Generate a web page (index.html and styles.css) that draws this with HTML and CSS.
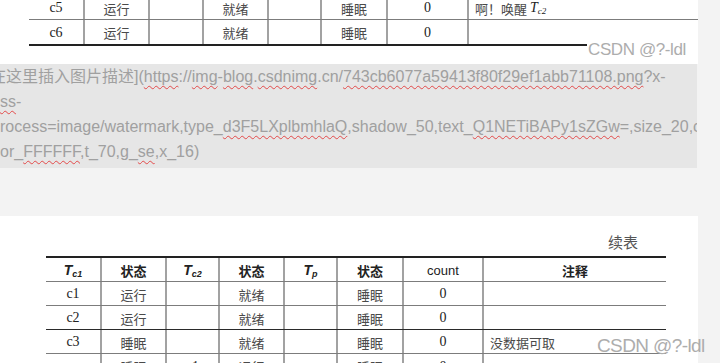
FILE: index.html
```html
<!DOCTYPE html>
<html lang="zh-CN">
<head>
<meta charset="utf-8">
<title>续表</title>
<link rel="stylesheet" href="styles.css">
</head>
<body>
<div class="page">
  <section class="card card-top">
    <div class="tbl tbl-top">
      <div class="grid-row row-gray">
        <div class="cell num">c5</div><div class="cell">运行</div><div class="cell"></div><div class="cell">就绪</div><div class="cell"></div><div class="cell">睡眠</div><div class="cell num">0</div><div class="cell note">啊！唤醒 <span class="tv">T<sub>c2</sub></span></div>
      </div>
      <div class="grid-row">
        <div class="cell num">c6</div><div class="cell">运行</div><div class="cell"></div><div class="cell">就绪</div><div class="cell"></div><div class="cell">睡眠</div><div class="cell num">0</div><div class="cell note"></div>
      </div>
      <div class="rule"></div>
    </div>
  </section>

  <section class="editor">
    <div class="ln ln1">在这里插入图片描述](<span class="sp">https</span>://<span class="sp">img</span>-<span class="sp">blog</span>.<span class="sp">csdnimg</span>.cn/<span class="sp">743cb6077a59413f80f29ef1abb71108.png</span>?x-</div>
    <div class="ln"><span class="sp">ss</span>-</div>
    <div class="ln">rocess=image/watermark,type_<span class="sp">d3F5LXplbmhlaQ</span>,shadow_50,text_<span class="sp">Q1NETiBAPy1sZGw</span>=,size_20,color</div>
    <div class="ln">or_<span class="sp">FFFFFF</span>,t_70,g_<span class="sp">se</span>,x_16)</div>
  </section>

  <div class="gap"></div>

  <section class="card card-bottom">
    <div class="caption">续表</div>
    <div class="tbl tbl-bottom">
      <div class="grid-row row-gray head">
        <div class="cell"><span class="tb">T<sub>c1</sub></span></div><div class="cell">状态</div><div class="cell"><span class="tb">T<sub>c2</sub></span></div><div class="cell">状态</div><div class="cell"><span class="tb">T<sub>p</sub></span></div><div class="cell">状态</div><div class="cell latin">count</div><div class="cell">注释</div>
      </div>
      <div class="grid-row row-gray">
        <div class="cell num">c1</div><div class="cell">运行</div><div class="cell"></div><div class="cell">就绪</div><div class="cell"></div><div class="cell">睡眠</div><div class="cell num">0</div><div class="cell note"></div>
      </div>
      <div class="grid-row row-dark">
        <div class="cell num">c2</div><div class="cell">运行</div><div class="cell"></div><div class="cell">就绪</div><div class="cell"></div><div class="cell">睡眠</div><div class="cell num">0</div><div class="cell note"></div>
      </div>
      <div class="grid-row row-gray">
        <div class="cell num">c3</div><div class="cell">睡眠</div><div class="cell"></div><div class="cell">就绪</div><div class="cell"></div><div class="cell">睡眠</div><div class="cell num">0</div><div class="cell note">没数据可取</div>
      </div>
      <div class="grid-row">
        <div class="cell num"></div><div class="cell">睡眠</div><div class="cell num">c1</div><div class="cell">运行</div><div class="cell"></div><div class="cell">睡眠</div><div class="cell num">0</div><div class="cell note"></div>
      </div>
    </div>
  </section>
</div>
<div class="wm wm-top">CSDN @?-ldl</div>
<div class="wm wm-bot">CSDN @?-ldl</div>
</body>
</html>
```

FILE: styles.css
```css
* { box-sizing: border-box; }
html, body { margin: 0; padding: 0; }
body {
  width: 720px;
  height: 363px;
  overflow: hidden;
  position: relative;
  background: #f3f3f3;
  font-family: "Liberation Sans", "Noto Sans CJK SC", sans-serif;
}
.page {
  width: 698px;
  display: flex;
  flex-direction: column;
}
.card {
  background: #fff;
  overflow: hidden;
}
.card-top {
  height: 64px;
  padding-left: 29px;
}
.tbl-top {
  margin-top: -4px;
  --cols: 54px 65px 54px 65px 53px 66px 81px 183px;
}
.grid-row {
  display: grid;
  grid-template-columns: var(--cols);
  height: 24px;
}
.row-gray { border-bottom: 1px solid #7c7c7c; }
.row-dark { border-bottom: 1px solid #2a2a2a; }
.cell {
  display: flex;
  align-items: center;
  justify-content: center;
  border-left: 2px solid #a2a2a2;
  padding-top: 1px;
  font-family: "Noto Sans CJK SC", sans-serif;
  font-size: 13px;
  color: #4a4a4a;
  white-space: nowrap;
}
.cell:first-child { border-left: none; }
.num {
  font-family: "Liberation Serif", "Noto Sans CJK SC", serif;
  font-size: 14px;
  color: #222;
}
.note {
  justify-content: flex-start;
  padding-left: 6px;
}
.tv {
  font-family: "Liberation Serif", serif;
  font-style: italic;
  font-size: 14px;
  color: #222;
  margin-left: 3px;
}
.tv sub, .tb sub {
  font-size: 9px;
  vertical-align: -2px;
  line-height: 0;
}
.rule {
  width: 558px;
  height: 2px;
  background: #222;
}

.editor {
  width: 697px;
  height: 104px;
  background: #e6e6e6;
  color: #a0a0a0;
  font-size: 16px;
  line-height: 25px;
  overflow: hidden;
  white-space: nowrap;
}
.ln1 { margin-left: -10px; }
.sp {
  text-decoration: underline wavy #e34a4a;
  text-decoration-thickness: 1px;
  text-underline-offset: 3px;
}

.gap { height: 48px; }

.card-bottom {
  height: 147px;
  padding-left: 46px;
}
.caption {
  margin-top: 16px;
  height: 20px;
  line-height: 20px;
  text-align: right;
  padding-right: 60px;
  font-family: "Noto Sans CJK SC", sans-serif;
  font-size: 15px;
  color: #555;
}
.tbl-bottom {
  margin-top: 4px;
  width: 620px;
  border-top: 2px solid #222;
  --cols: 54px 65px 53px 65px 53px 66px 80px 184px;
}
.head .cell {
  font-weight: 700;
  color: #222;
}
.head .latin {
  font-family: "Liberation Sans", sans-serif;
  font-weight: 400;
  font-size: 13px;
}
.tb {
  font-family: "Liberation Sans", sans-serif;
  font-style: italic;
  font-weight: 700;
  font-size: 14px;
  color: #222;
}

.wm {
  position: absolute;
  line-height: 1;
  color: #adadad;
  font-family: "Liberation Sans", sans-serif;
  white-space: nowrap;
}
.wm-top {
  left: 588px;
  top: 41px;
  font-size: 17px;
  letter-spacing: -0.4px;
}
.wm-bot {
  left: 597px;
  top: 336px;
  font-size: 19px;
  letter-spacing: -0.6px;
}
```
